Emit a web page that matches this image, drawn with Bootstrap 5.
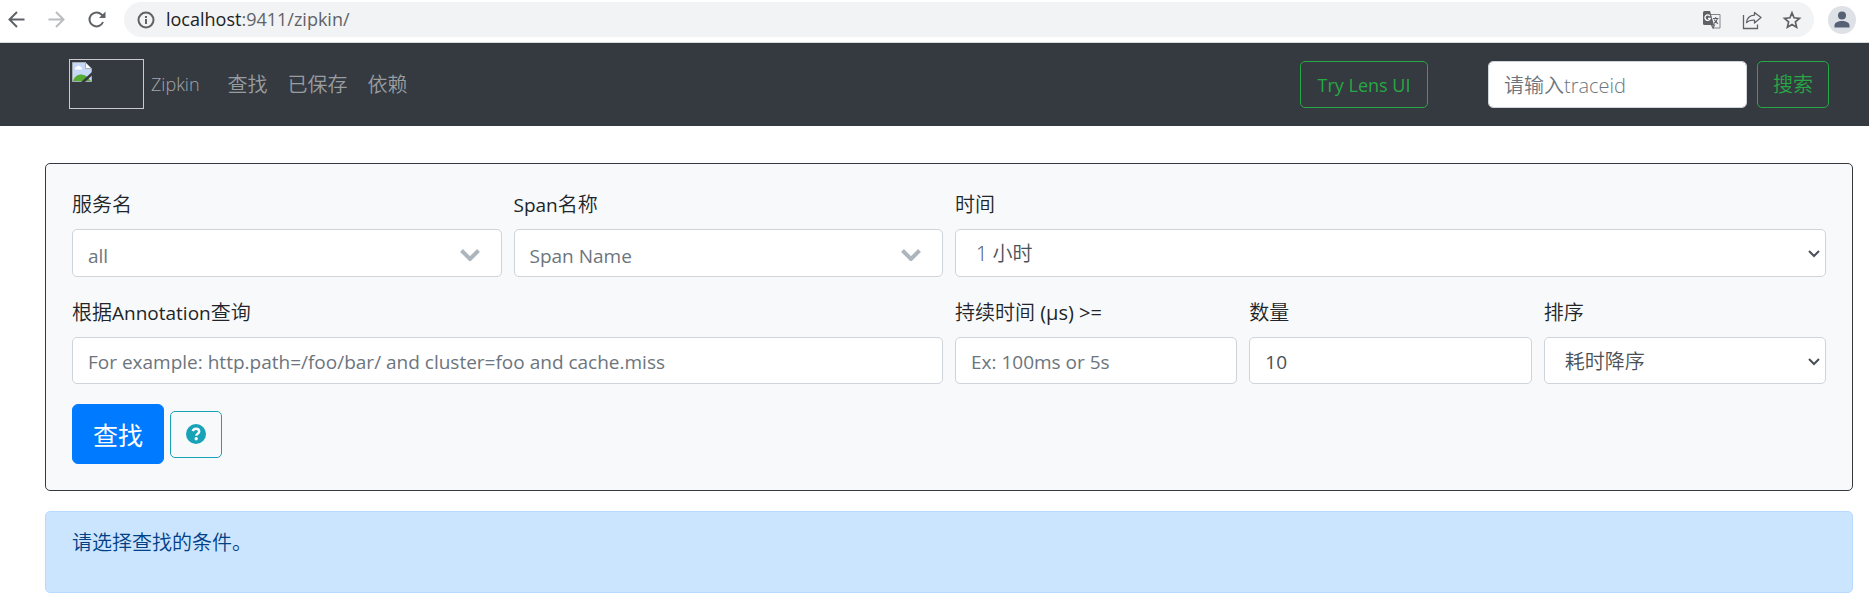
<!DOCTYPE html>
<html lang="zh-CN">
<head>
<meta charset="utf-8">
<meta name="viewport" content="width=device-width, initial-scale=1">
<title>Zipkin</title>
<link rel="stylesheet" href="https://cdn.jsdelivr.net/npm/bootstrap@5.3.0/dist/css/bootstrap.min.css">
<style>
  html { font-size: 20px; }
  body { font-family: "Open Sans", "Noto Sans CJK SC", sans-serif; font-size: 20px; font-weight: 350; line-height: 30px; color: #212529; background: #fff; }
  .latin, .latin::placeholder { font-size: 19px; font-weight: 400; }

  /* Browser toolbar */
  .toolbar { height: 43px; padding: 2px 13px 5px 6px; border-bottom: 1px solid #d5d9dc; }
  .tool { border: 0; padding: 0; background: none; line-height: 0; color: #5f6368; }
  .tool:disabled { color: #babcbe; }
  .tool-group { gap: 20px; margin-right: 18px; }
  .address { height: 35px; border-radius: 18px; background: #f1f3f4; padding: 0 12px 0 13px; gap: 11px; color: #5f6368; line-height: 0; }
  .address a { color: #5f6368; font-size: 18px; font-weight: 400; line-height: 28px; padding-bottom: 2px; text-decoration: none; }
  .address b { color: #202124; font-weight: 400; }
  .page-tools { gap: 20px; }
  .avatar { width: 28px; height: 28px; border-radius: 50%; background: #dee1e6; overflow: hidden; margin-left: 14px; }

  /* Site header */
  .site-nav { background: #343a40; padding: 16px 40px 17px 69px; }
  .brand-logo { width: 75px; height: 50px; border: 1px solid #c8cacc; padding: 2px; line-height: 0; }
  .brand-name { font-size: 18px; font-weight: 300; color: #a4a7aa; text-decoration: none; margin: 0 18px 0 7px; }
  .site-nav .nav-link { color: #999da0; padding: 9px 10px 7px; line-height: 30px; }
  .site-nav .trace-field { width: 259px; }
  .site-nav .lens-link { width: 128px; margin-right: 60px; font-size: 18px; font-weight: 400; }
  .btn-green { --bs-btn-color: #28a745; --bs-btn-border-color: #28a745; --bs-btn-hover-bg: #28a745; --bs-btn-hover-border-color: #28a745; --bs-btn-hover-color: #fff; }

  /* Shared control sizes */
  .btn, .form-control, .form-select { font-size: 20px; font-weight: 350; line-height: 30px; border-radius: 5px; height: 47px; padding: 8px 15px 6px; }
  .form-control, .form-select { border-color: #ced4da; color: #495057; }
  .form-control::placeholder { color: #6c757d; opacity: 1; }
  .form-control.latin { font-size: 19px; font-weight: 400; }
  .form-select { padding-left: 20px; background-position: right 3px center; background-size: 16px 16px;
    background-image: url("data:image/svg+xml,%3csvg xmlns='http://www.w3.org/2000/svg' viewBox='0 0 16 16'%3e%3cpath fill='none' stroke='%23495057' stroke-width='2' d='m3 6 5 5 5-5'/%3e%3c/svg%3e"); }
  .combo { background: #fff url("data:image/svg+xml,%3csvg xmlns='http://www.w3.org/2000/svg' viewBox='0 0 20 15'%3e%3cpath fill='none' stroke='%23adb5bd' stroke-width='4' d='m1.500 4.500 8.500 8.500 8.500-8.500'/%3e%3c/svg%3e") no-repeat right 21px center / 20px 15px; }
  .form-control.tall, .form-select.tall { height: 48px; }
  .form-control.combo { padding: 11px 50px 5px 15px; }

  /* Page body */
  .page { padding: 37px 16px 10px 45px; }
  .search-box { background: #f8f9fa; border: 1px solid #343a40; border-radius: 5px; padding: 25px 26px 26px; }
  .search-box .row { --bs-gutter-x: 12px; }
  .search-box .row > * { margin-bottom: 20px; }
  .search-box .form-label { display: block; padding-top: 1px; margin-bottom: 9px; line-height: 30px; }
  .unit { font-weight: 400; }
  .search-box .btn-find { --bs-btn-bg: #007bff; --bs-btn-color: #fff; --bs-btn-border-color: #007bff; --bs-btn-hover-bg: #0069d9; --bs-btn-hover-color: #fff; width: 92px; height: 60px; padding: 2px 0 0; font-size: 25px; font-weight: 400; border-radius: 6px; }
  .search-actions { gap: 6px; }
  .search-box .btn-help { --bs-btn-color: #17a2b8; --bs-btn-border-color: #17a2b8; --bs-btn-hover-bg: #17a2b8; --bs-btn-hover-color: #fff; padding: 0 15px; }
  .notice { background: #cce5ff; border: 1px solid #b8daff; color: #004085; border-radius: 5px; margin: 20px 0 0; padding: 16px 26px 34px; }
</style>
</head>
<body>
<div class="toolbar d-flex align-items-center">
  <div class="tool-group d-flex">
    <button class="tool" type="button" aria-label="Back"><svg width="20" height="20" viewBox="0 0 20 20" fill="none" stroke="currentColor" stroke-width="2"><path d="M18.500 9.500H3.500M11 2 3.500 9.500l7.500 7.500"/></svg></button>
    <button class="tool" type="button" aria-label="Forward" disabled><svg width="20" height="20" viewBox="0 0 20 20" fill="none" stroke="currentColor" stroke-width="2"><path d="M2.500 9.500h15M10 2l7.500 7.500L10 17"/></svg></button>
    <button class="tool" type="button" aria-label="Reload"><svg width="20" height="20" viewBox="0 0 20 20" fill="none" stroke="currentColor" stroke-width="2"><path d="M17 12A7 7 0 1 1 15.500 4.500l2 2"/><path d="M19.500 1.500V8H13z" fill="currentColor" stroke="none"/></svg></button>
  </div>
  <div class="address d-flex align-items-center flex-grow-1">
    <svg width="18" height="18" viewBox="0 0 18 18" fill="none" stroke="currentColor" stroke-width="2"><circle cx="9" cy="9" r="7.500"/><path d="M9 8v5M9 5v2"/></svg>
    <a class="me-auto" href="#"><b>localhost</b>:9411/zipkin/</a>
    <div class="page-tools d-flex align-items-center">
      <button class="tool" type="button" aria-label="Translate"><svg width="20" height="20" viewBox="0 0 20 20"><path d="M9 4.500h9v13.500h-7" fill="#f1f3f4" stroke="#80868b"/><path d="M2.500 1H8l4 14H2.500A1.500 1.500 0 0 1 1 13.500v-11A1.500 1.500 0 0 1 2.500 1z" fill="#5f6368"/><path d="M7.800 6A2.700 2.700 0 1 0 8.300 8.300H6" fill="none" stroke="#fff" stroke-width="1.300"/><path d="M11 8.500h5.500M13.700 7v1.500M15.500 8.500c-.5 2.500-2 4-3.500 5M12.300 9.500c.7 1.800 2 3.200 3.700 4.300M9.500 15l1.500 3 1.500-3z" fill="none" stroke="#5f6368" stroke-width="1.100"/></svg></button>
      <button class="tool" type="button" aria-label="Share"><svg width="20" height="20" viewBox="0 0 20 20" fill="none" stroke="currentColor" stroke-width="1.300"><path d="M1.500 5v13.500h14v-4"/><path d="M12.500 2.500 19 7.500l-6.500 5.500V10.200c-3.500-.3-6 .3-8 2.300.5-4.500 3.500-7 8-7.300z" stroke-linejoin="round"/></svg></button>
      <button class="tool" type="button" aria-label="Bookmark"><svg width="20" height="20" viewBox="0 0 20 20" fill="none" stroke="currentColor" stroke-width="1.700"><path d="m10 2.800 2.100 5 5.400.5-4.100 3.600 1.200 5.300-4.600-2.800-4.600 2.800 1.200-5.300-4.100-3.600 5.400-.5z"/></svg></button>
    </div>
  </div>
  <button class="tool avatar" type="button" aria-label="Profile"><svg width="28" height="28" viewBox="0 0 28 28" fill="#566175"><circle cx="14" cy="9.500" r="4"/><path d="M6.500 21.500v-2c0-3 3.500-4.500 7.500-4.500s7.500 1.500 7.500 4.500v2z"/></svg></button>
</div>

<nav class="site-nav d-flex align-items-center">
  <span class="brand-logo"><svg width="20" height="20" viewBox="0 0 20 20"><path d="M.5.500h13l6 6v13H.500z" fill="#c6d9f7" stroke="#a9adb2"/><path d="M13.500.500v6h6z" fill="#fff" stroke="#a9adb2"/><path d="M3 7.500a2 2 0 0 1 1.500-2.500 2 2 0 0 1 3.500-.5c1.500 0 2 1 2 3z" fill="#fff"/><path d="M1 19c1-4 5-7 8-6.500 3-.5 6 1.500 10 6.500z" fill="#56ad33"/><path d="m9 20 11-10v3.500L13 20z" fill="#343a40"/></svg></span>
  <a class="brand-name" href="#">Zipkin</a>
  <div class="nav me-auto">
    <a class="nav-link" href="#">查找</a>
    <a class="nav-link" href="#">已保存</a>
    <a class="nav-link" href="#">依赖</a>
  </div>
  <button class="btn btn-green lens-link text-nowrap px-0" type="button">Try Lens UI</button>
  <form class="d-flex">
    <input class="form-control trace-field me-2" type="text" placeholder="请输入traceid" aria-label="traceid">
    <button class="btn btn-green text-nowrap" type="button">搜索</button>
  </form>
</nav>

<main class="page">
  <form class="search-box">
    <div class="row">
      <div class="col-3">
        <label class="form-label" for="service">服务名</label>
        <input class="form-control combo tall latin" id="service" type="text" placeholder="all">
      </div>
      <div class="col-3">
        <label class="form-label" for="span"><span class="latin">Span</span>名称</label>
        <input class="form-control combo tall latin" id="span" type="text" placeholder="Span Name">
      </div>
      <div class="col-6">
        <label class="form-label" for="lookback">时间</label>
        <select class="form-select tall" id="lookback"><option>1 小时</option></select>
      </div>
      <div class="col-6">
        <label class="form-label" for="annotation">根据<span class="latin">Annotation</span>查询</label>
        <input class="form-control latin" id="annotation" type="text" placeholder="For example: http.path=/foo/bar/ and cluster=foo and cache.miss">
      </div>
      <div class="col-2">
        <label class="form-label" for="duration">持续时间 <span class="unit">(μs) &gt;=</span></label>
        <input class="form-control latin" id="duration" type="text" placeholder="Ex: 100ms or 5s">
      </div>
      <div class="col-2">
        <label class="form-label" for="limit">数量</label>
        <input class="form-control latin" id="limit" type="text" value="10">
      </div>
      <div class="col-2">
        <label class="form-label" for="sort">排序</label>
        <select class="form-select" id="sort"><option>耗时降序</option></select>
      </div>
    </div>
    <div class="search-actions d-flex align-items-center">
      <button class="btn btn-find" type="button">查找</button>
      <button class="btn btn-help d-flex align-items-center" type="button" aria-label="Help"><svg width="20" height="20" viewBox="0 0 20 20"><circle cx="10" cy="10" r="10" fill="currentColor"/><path d="M6.700 7.200C7.300 5.500 8.500 4.800 10 4.800c1.800 0 3.200 1 3.200 2.700 0 2.200-2.900 2.200-2.900 4.200" fill="none" stroke="#f8f9fa" stroke-width="2.400"/><circle cx="10.200" cy="14.700" r="1.700" fill="#f8f9fa"/></svg></button>
    </div>
  </form>
  <p class="notice">请选择查找的条件。</p>
</main>
<script src="https://cdn.jsdelivr.net/npm/bootstrap@5.3.0/dist/js/bootstrap.bundle.min.js"></script>
</body>
</html>
